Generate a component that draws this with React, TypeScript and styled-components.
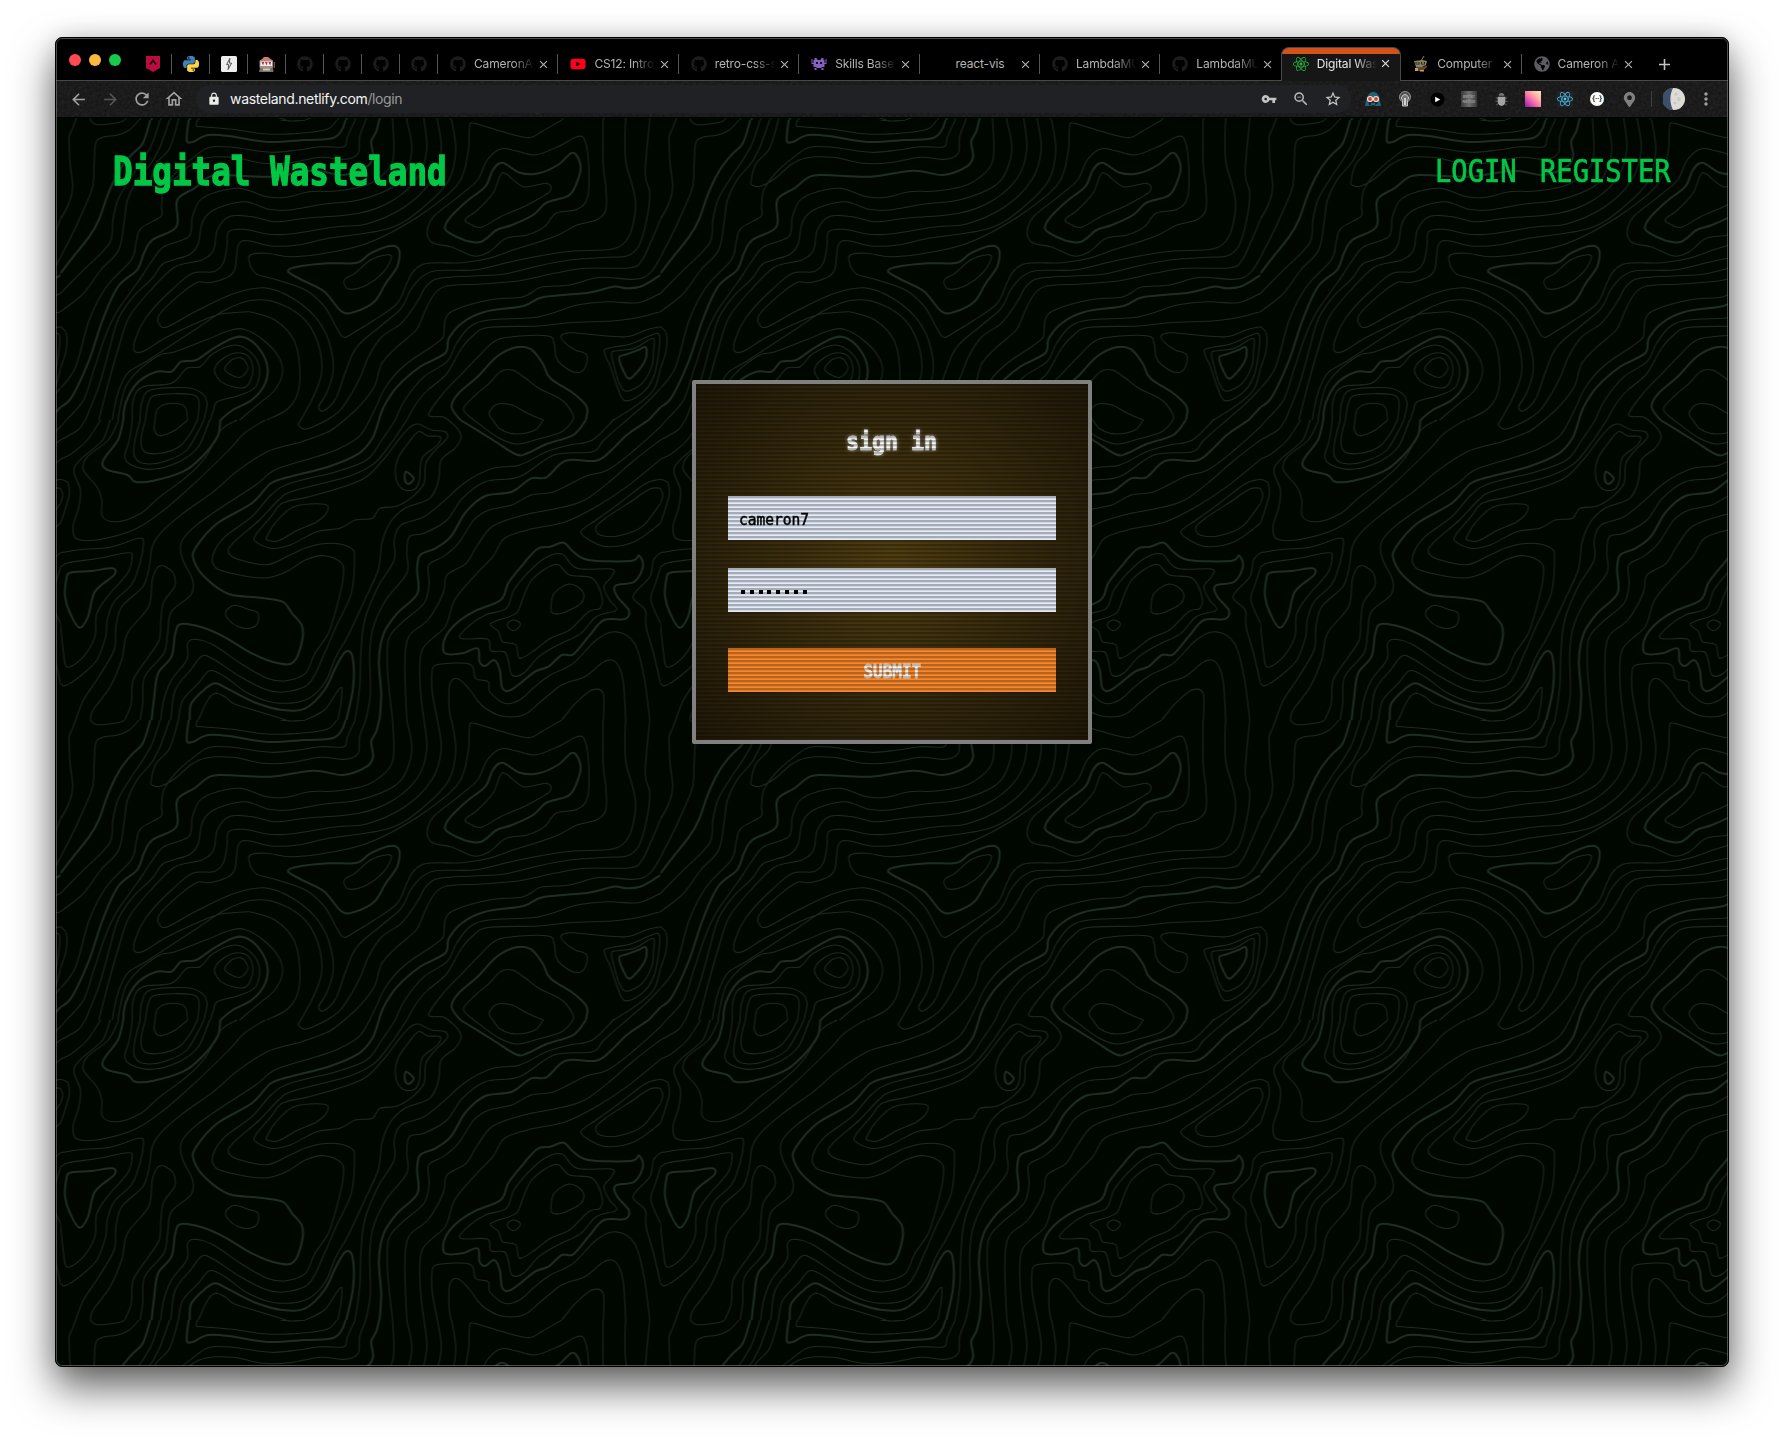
import React from 'react';
import styled, { createGlobalStyle } from 'styled-components';
import { FaGithub, FaReact, FaYoutube, FaGlobeAmericas, FaMapMarkerAlt } from 'react-icons/fa';
import {
  MdAdd, MdArrowBack, MdArrowForward, MdClose, MdLock, MdMoreVert,
  MdOutlineHome, MdRefresh, MdStarBorder, MdVpnKey, MdZoomOut,
} from 'react-icons/md';

const mono = '"DejaVu Sans Mono", "Liberation Mono", monospace';
const sans = 'Inter, Roboto, "Liberation Sans", sans-serif';
const green = '#00c846';

const GlobalStyle = createGlobalStyle`
  *, *::before, *::after { box-sizing: border-box; }
  html, body { margin: 0; background: #fff; }
  body { overflow: hidden; }
`;

/* ---------- window ---------- */

const Desktop = styled.div`
  width: 1784px;
  height: 1440px;
  padding: 37px 55px 73px;
  overflow: hidden;
  background: #fff;
`;

const BrowserWindow = styled.div`
  display: flex;
  flex-direction: column;
  height: 1330px;
  border: 1px solid #000;
  border-radius: 7px;
  overflow: hidden;
  position: relative;
  background: #000;
  box-shadow: 0 20px 42px rgba(0, 0, 0, 0.62), 0 0 22px rgba(0, 0, 0, 0.12);
  &::after {
    content: '';
    position: absolute;
    inset: 0;
    border: 1px solid rgba(150, 150, 150, 0.5);
    border-radius: 6px;
    pointer-events: none;
  }
`;

const TabStrip = styled.div`
  display: flex;
  flex: none;
  height: 43px;
  padding-left: 13px;
  border-bottom: 1px solid #484848;
`;

const Lights = styled.div`
  display: flex;
  gap: 8px;
  width: 65px;
  padding-top: 16px;
`;

const Light = styled.span<{ $color: string }>`
  width: 12px;
  height: 12px;
  border-radius: 50%;
  background: ${(p) => p.$color};
`;

const PinnedTab = styled.div`
  display: flex;
  justify-content: center;
  width: 38px;
  height: 20px;
  margin-top: 16px;
  border-right: 1px solid #565656;
  svg { margin-top: 2px; width: 16px; height: 16px; }
`;

const Tab = styled.div<{ $active?: boolean; $divider?: boolean }>`
  display: flex;
  align-items: center;
  flex: none;
  position: relative;
  width: 120.4px;
  height: ${(p) => (p.$active ? 34 : 20)}px;
  margin-top: ${(p) => (p.$active ? 9 : 16)}px;
  padding: ${(p) => (p.$active ? '0 8px 2px 11px' : '0 7px 0 12px')};
  border: solid ${(p) => (p.$active ? '#484848' : '#565656')};
  border-width: ${(p) => (p.$active ? '1px 1px 0' : p.$divider ? '0 1px 0 0' : '0')};
  border-radius: ${(p) => (p.$active ? '8px 8px 0 0' : '0')};
  background: ${(p) => (p.$active ? 'linear-gradient(#d4521a 0 6px, #161616 6px)' : 'none')};
  color: ${(p) => (p.$active ? '#e6e6e6' : '#b4b4b4')};
  > svg { flex: none; }
`;

const TabTitle = styled.span`
  flex: 1;
  margin-left: 8px;
  overflow: hidden;
  white-space: nowrap;
  font: 400 12px/20px ${sans};
  letter-spacing: -0.15px;
  mask-image: linear-gradient(90deg, #000 62%, transparent 98%);
`;

const ShortTitle = styled(TabTitle)`
  overflow: visible;
  mask-image: none;
`;

const TabIcon = styled.span`
  display: flex;
  flex: none;
  width: 16px;
  height: 16px;
  svg { width: 16px; height: 16px; }
`;

const CloseIcon = styled(MdClose)`
  width: 13px;
  height: 13px;
  margin-left: 1px;
`;

const NewTab = styled.div`
  display: flex;
  margin: 17px 0 0 13px;
  color: #c4c4c4;
  svg { width: 19px; height: 19px; }
`;

/* ---------- toolbar ---------- */

const Toolbar = styled.div`
  display: flex;
  align-items: center;
  flex: none;
  position: relative;
  height: 37px;
  padding-left: 13px;
  background: #131313;
  border-bottom: 1px solid #000;
`;

const Grain = styled.svg`
  position: absolute;
  inset: 0;
  width: 100%;
  height: 100%;
  opacity: 0.1;
`;

const ToolCell = styled.span<{ $tone?: string; $size?: number }>`
  display: flex;
  align-items: center;
  justify-content: center;
  flex: none;
  position: relative;
  width: 32px;
  height: 28px;
  color: ${(p) => p.$tone || '#a0a0a0'};
  svg { width: ${(p) => p.$size || 18}px; height: ${(p) => p.$size || 18}px; }
`;

const NavButtons = styled.div`
  display: flex;
  width: 127px;
  margin-left: -7px;
`;

const Omnibox = styled.div`
  display: flex;
  align-items: center;
  position: relative;
  width: 1155px;
  height: 28px;
  margin-left: 7px;
  padding: 0 2px 0 11px;
  border-radius: 14px;
  background: #202124;
  color: #eaeaea;
  > svg { width: 14px; height: 14px; margin-right: 9px; }
`;

const Address = styled.span`
  flex: 1;
  font: 400 14px/20px ${sans};
  letter-spacing: -0.33px;
  color: #f4f4f4;
  em { font-style: normal; color: #97999c; letter-spacing: -0.4px; }
`;

const Extensions = styled.div`
  display: flex;
  align-items: center;
  margin-left: 6px;
`;

const Divider = styled.span`
  position: relative;
  width: 1px;
  height: 16px;
  margin: 0 6px 0 6px;
  background: #404040;
`;

/* ---------- page ---------- */

const Page = styled.main`
  flex: 1;
  position: relative;
  background: #000600;
`;

const Topography = styled.svg`
  position: absolute;
  inset: 0;
  width: 100%;
  height: 100%;
`;

const Header = styled.header`
  display: flex;
  justify-content: space-between;
  position: relative;
  height: 108px;
  padding: 31px 57px 0 57px;
`;

const Fit = styled.span<{ $width: number }>`
  display: block;
  width: ${(p) => p.$width}px;
  white-space: nowrap;
`;

const Terminal = styled.span<{
  $size: number;
  $squeeze: number;
  $stroke: number;
  $bold?: boolean;
  $center?: boolean;
}>`
  display: inline-block;
  transform: scaleX(${(p) => p.$squeeze});
  transform-origin: ${(p) => (p.$center ? 'center' : 'left')} center;
  font: ${(p) => (p.$bold ? 700 : 400)} ${(p) => p.$size}px/1.2 ${mono};
  -webkit-text-stroke: ${(p) => p.$stroke}px currentColor;
  white-space: nowrap;
`;

const Nav = styled.nav`
  display: flex;
  gap: 24px;
  padding-top: 3px;
  color: ${green};
`;

const Brand = styled.div`
  color: ${green};
`;

const Card = styled.form`
  display: flex;
  flex-direction: column;
  position: relative;
  width: 400px;
  height: 364px;
  margin: 154px auto 0;
  padding: 44px 32px 0;
  border: 4px solid #808080;
  border-radius: 2px;
  background: radial-gradient(circle farthest-corner at 50% 50%, #544111 0%, #3a2d0d 48%, #201808 100%);
  &::after {
    content: '';
    position: absolute;
    inset: 0;
    background: repeating-linear-gradient(
      rgba(0, 0, 0, 0.29) 0 2px,
      rgba(0, 0, 0, 0.1) 2px 3px,
      rgba(0, 0, 0, 0.02) 3px 4px
    );
    pointer-events: none;
  }
`;

const CardTitle = styled.h2`
  height: 68px;
  margin: 0;
  text-align: center;
  color: #fff;
  text-shadow: 0 0 5px rgba(255, 255, 255, 0.75);
`;

const Field = styled.div`
  display: flex;
  align-items: center;
  height: 44px;
  margin-bottom: 28px;
  padding: 3px 12px 0 11px;
  background: #e8f0fe;
  color: #000;
`;

const Dots = styled.span`
  display: flex;
  gap: 4.8px;
  padding: 0 0 0 2px;
`;

const Dot = styled.i`
  width: 4px;
  height: 4px;
  background: #000;
`;

const Submit = styled.div`
  display: flex;
  align-items: center;
  justify-content: center;
  height: 44px;
  margin-top: 8px;
  padding-top: 2px;
  background: #ff8b2c;
  color: #fff;
`;

/* ---------- contour map ---------- */

/* Contours are surveyed on a 1568 x 1800 grid that is scaled to a 600px tile. A trailing z closes the loop. */
const thin = `
22,50 25,130 32,200 22,250 0,298|40,0 22,50
78,0 95,14 150,8 168,0
205,0 180,30 150,45 110,52 92,70 88,130 84,200 60,270 30,345 0,412
260,0 240,70 215,120 180,180 150,240 137,300 128,370 60,450 0,520
285,0 262,75 240,125 200,180 175,240 167,300 152,390 105,450 60,520 0,575
308,0 285,85 250,130 237,180 240,196 262,198 300,175 340,135 380,114 450,112 530,130 600,128 680,112 745,118 778,100 782,50 798,0
770,0 750,50 740,80 680,80 620,90 550,97 450,82 390,82 350,110 300,160 270,210 264,260 262,290 210,325 197,370 185,420 120,500 75,600 40,740 0,805
358,0 355,17 370,20 450,28 540,42 640,38 700,26 722,0
575,0 605,3 640,0
868,0 871,100 855,150 800,195 720,213 650,215 590,232 540,230 470,205 410,215 365,240 345,290 335,350 270,380 235,430 200,490 150,570 120,640 90,740 60,840 15,900
905,0 918,80 905,150 870,200 780,240 690,252 600,270 545,268 480,245 400,270 370,310 360,370 335,405 270,430 240,475 190,530 150,600 125,700 100,800 65,900
950,0 957,90 935,170 870,240 780,280 640,295 560,305 500,290 440,290 410,330 400,390 370,420 300,440 240,505 180,590 150,690 125,790 100,900
985,0 995,90 970,180 900,260 800,312 720,320 600,342 540,342 480,328 440,335 435,380 425,430 400,455 345,460 290,510 225,590 195,660 194,694 220,692 280,650 400,588 450,578 495,575
495,575 560,600 610,660 625,740 620,820 590,870 538,900
135,900 150,820 175,760 230,720 350,630 430,570 500,541 560,546 630,590 670,660 683,750 665,820 628,900
1022,0 1033,90 1015,180 950,260 860,325 700,355 620,375 550,378 490,362 465,375 455,450 430,475 390,488 355,488 300,535 258,585 258,612 280,620 360,570 450,522 530,503 600,530 665,590 700,660 713,750 695,820 675,860 688,872 720,835 745,755 775,680 840,615 890,565 915,510 940,475 980,452 1080,450 1160,430 1240,410 1340,393 1440,388 1480,360 1497,310 1503,250 1495,200 1478,130 1475,60 1477,0
150,900 160,840 175,790 210,745 260,705 300,695 380,660 440,632 480,628 530,660 570,710 580,760 560,810 520,850 468,900
188,900 190,840 215,800 290,790 330,745 365,740 400,700 455,675 500,700 520,745 510,800 470,825 410,845 400,870 392,900
403,745 430,712 465,698 495,715 502,760 485,800 450,800 415,780z
429,745 450,718 475,715 490,745 470,772 442,762z
208,900 212,850 235,810 330,803 370,820 383,850 375,900
222,900 230,850 250,825 340,823 362,845 358,900
247,900 255,865 290,850 325,860 332,900
1418,0 1418,130 1425,200 1425,270 1400,300 1350,315 1290,350 1170,395 1120,415 1050,428 960,430 925,450 905,490 880,550 820,600 770,635 740,652 720,620 690,560 640,510 560,478 510,460 492,420 500,403 540,400 600,410 680,402 780,378 860,340 960,270 1040,190 1065,100 1069,20 1080,10 1140,30 1220,53 1260,33 1310,0
1540,0 1528,160 1540,220 1530,310 1510,380 1480,408 1430,412 1330,420 1240,440 1160,462 1080,468 990,475 955,500 930,550 890,610 840,650 805,710 780,780 735,865 697,900
1568,298 1545,360 1520,420 1490,443 1370,445 1290,460 1200,482 1100,492 1010,498 975,525 950,580 930,630 880,680 840,730 820,800 780,860 742,900
1568,412 1540,460 1500,478 1410,472 1330,495 1255,502 1210,530 1120,540 1030,570 1005,600 1000,650 970,680 900,735 850,800 825,860 808,900
1568,520 1510,548 1430,545 1350,555 1250,590 1120,600 1070,620 1035,670 1010,725 950,770 900,840 875,900
1568,575 1500,595 1440,603 1330,608 1250,618 1120,622 1080,645 1045,690 1010,760 960,810 930,850 905,900
1568,620 1530,630 1480,650 1400,645 1335,638 1308,648 1320,670 1345,690 1375,705 1370,745 1348,758 1310,735 1295,710 1290,670 1275,648 1200,648 1140,660 1100,700 1050,760 1000,820 963,880 975,890 1005,893 1045,940 1035,980 995,1020 988,1080 965,1135 900,1165 860,1210 840,1270 830,1350 795,1440 750,1550 720,1610 690,1690 640,1740 560,1748 490,1720 430,1670 390,1652 360,1690 320,1740 308,1800
0,620 15,640 15,690 0,745
1565,645 1563,700 1550,770 1520,820 1475,842 1455,800 1437,740 1422,700 1430,685 1490,672 1545,645z
1440,698 1455,692 1500,685 1548,655 1550,690 1545,740 1520,790 1480,814 1460,790 1445,730z
1568,745 1550,810 1500,860 1445,900
1568,805 1530,850 1480,900
1058,298 1090,270 1130,220 1150,165 1165,162 1210,200 1270,190 1278,215 1220,255 1150,290 1100,322 1070,312z
958,340 975,290 1040,230 1090,180 1115,120 1150,87 1190,92 1240,105 1300,80 1350,50 1370,60 1380,130 1378,230 1350,268 1295,280 1265,320 1220,345 1165,355 1120,395 1080,408 1020,380 975,370z
745,475 770,460 810,420 850,405 865,412 845,455 800,495 755,508 741,490z
1080,900 1053,868 1080,830 1120,790 1150,755 1180,750 1210,770 1250,805 1310,840 1338,880 1340,900
1130,900 1120,880 1140,853 1180,855 1220,880 1262,900
15,900 0,920
65,900 45,930 0,960
105,900 70,960 30,1000 0,1018
130,900 110,960 60,1010 35,1050 52,1110 48,1160 33,1220 45,1258 110,1257 200,1225 270,1170 350,1090 440,990 480,940 535,900
152,900 125,960 70,1010 60,1050 95,1100 108,1140 110,1190 150,1205 210,1180 260,1130 330,1070 380,1010 420,930 462,900
188,900 180,960 168,1010 185,1035 240,1048 310,1025 360,980 390,900
208,900 195,960 192,1005 215,1030 270,1025 330,990 375,900
222,900 210,960 220,995 260,1000 310,980 340,940 358,900
247,900 245,930 260,947 300,930 332,900
628,900 622,915 640,928 670,915 697,900
742,900 700,935 630,965 540,995 460,1055 400,1115 320,1180 265,1235 240,1280 232,1340 215,1400 160,1460 145,1520 140,1590 100,1670 60,1740 40,1800
0,1298 60,1288 130,1282 205,1255 217,1270 205,1340 185,1395 140,1445 122,1500 118,1550 95,1620 50,1670 12,1697 0,1690
0,1342 20,1328 100,1315 175,1298 187,1310 175,1360 130,1420 95,1480 90,1550 60,1610 18,1642 8,1600 0,1510
78,1800 85,1770 130,1700 160,1620 175,1540 230,1460 240,1380 252,1345 268,1337 295,1360 298,1400 270,1445 262,1500 258,1560 230,1610 190,1680 185,1750 168,1800
808,900 780,950 720,990 640,1020 560,1050 510,1095 430,1155 350,1220 315,1270 320,1320 345,1380 340,1425 290,1475 280,1540 270,1600 220,1670 215,1750 208,1800
875,900 840,960 800,1020 720,1055 600,1090 550,1125 500,1190 430,1250 400,1300 400,1335 430,1355 530,1374 590,1355 640,1320 690,1307 735,1330 738,1380 722,1460 700,1540 665,1600 640,1660 590,1682 540,1675 470,1630 400,1575 350,1558 332,1572 330,1620 290,1680 270,1740 262,1800
905,900 870,960 820,1030 750,1070 610,1112 570,1140 520,1200 450,1270 440,1300 470,1320 540,1334 600,1305 650,1280 710,1270 760,1285 768,1320 760,1420 720,1520 690,1600 650,1690 590,1715 540,1710 470,1670 400,1618 370,1608 340,1650 300,1710 288,1800
360,1800 385,1740 405,1720 430,1730 455,1752 520,1775 590,1800
640,1800 690,1770 720,1720 735,1703 733,1750 725,1800
935,912 970,930 1005,935 1010,955 980,990 955,1030 950,1090 920,1130 880,1158 835,1165 815,1195 770,1200 730,1225 670,1235 600,1275 550,1285 510,1265 510,1245 550,1190 580,1150 650,1130 740,1100 800,1070 850,1010 890,950 915,920z
935,935 960,948 992,950 985,975 945,1015 938,1080 925,1108 895,1108 877,1075 880,1020 905,975z
540,1250 560,1210 610,1160 690,1153 697,1175 670,1205 620,1230 570,1262 540,1260z
432,1475 455,1456 490,1468 515,1478 515,1510 495,1525 465,1520 440,1500z
1080,900 1140,950 1190,972 1240,960 1310,935 1340,900
1130,900 1150,928 1190,942 1240,930 1262,900
1445,900 1390,960 1330,975 1270,995 1200,1035 1130,1045 1060,1085 1000,1145 950,1190 890,1215 872,1260 872,1320 830,1400 795,1500 785,1600 782,1700 770,1800
1480,900 1420,960 1390,995 1290,1005 1200,1070 1110,1085 1050,1135 1010,1200 950,1240 912,1250 905,1300 905,1360 850,1440 818,1520 808,1600 810,1720 798,1800
1568,920 1500,990 1430,1050 1370,1070 1290,1115 1230,1125 1180,1155 1120,1170 1080,1200 1040,1270 1000,1310 962,1335 963,1390 950,1450 890,1510 857,1560 855,1660 868,1800
1568,960 1500,1020 1440,1080 1370,1140 1300,1165 1210,1185 1130,1218 1090,1275 1060,1330 1010,1365 1000,1420 960,1500 910,1550 900,1640 905,1800
1568,1018 1480,1100 1400,1160 1320,1205 1220,1230 1160,1255 1130,1310 1080,1370 1030,1440 1005,1520 945,1590 940,1700 950,1800
1045,1555 1065,1520 1110,1485 1165,1465 1185,1410 1220,1360 1265,1315 1310,1302 1350,1345 1440,1347 1440,1370 1420,1400 1435,1440 1453,1470 1400,1490 1360,1540 1300,1575 1250,1610 1210,1660 1180,1665 1170,1620 1160,1595 1125,1592 1115,1557z
1125,1510 1190,1480 1210,1430 1235,1375 1295,1333 1330,1365 1390,1375 1415,1430 1410,1465 1380,1475 1330,1530 1280,1555 1240,1590 1200,1615 1190,1575 1155,1565 1145,1535z
1282,1460 1290,1420 1330,1392 1365,1415 1360,1450 1310,1480 1285,1478z
1167,1515 1183,1500 1202,1512 1185,1532z
1568,1078 1530,1090 1460,1150 1400,1200 1360,1235 1390,1265 1430,1280 1500,1265 1568,1210
1568,1105 1540,1107 1490,1145 1430,1190 1400,1220 1410,1245 1460,1247 1520,1220 1568,1150
0,1078 20,1090 22,1130 0,1210
0,1105 6,1125 0,1150
1568,1298 1550,1320 1540,1370 1500,1420 1500,1440 1528,1470 1530,1520 1550,1600 1568,1690
1568,1342 1555,1390 1543,1440 1568,1510
985,1800 972,1720 972,1650 990,1633 1070,1633 1085,1675 1118,1685 1122,1715 1160,1750 1200,1740 1240,1700 1280,1665 1340,1630 1400,1560 1450,1535 1500,1570 1525,1670 1540,1800
1020,1800 1015,1750 1018,1690 1040,1677 1070,1710 1100,1755 1150,1787 1210,1785 1260,1740 1310,1695 1370,1670 1420,1625 1450,1625 1470,1680 1477,1800
1310,1800 1350,1745 1390,1710 1418,1720 1419,1800
`;

const thick = `
235,0 215,70 185,105 155,150 125,220 100,300 75,350 30,415 0,460
335,0 330,60 345,66 385,45 440,48 540,66 640,60 710,55 735,30 745,0
833,0 825,35 812,65 817,110 800,140 740,165 660,152 550,170 430,165 390,170 350,205 305,240 303,320 240,360 218,400 200,450 150,500 110,600 75,720 30,830 0,862
164,900 170,850 200,790 250,755 290,755 315,725 355,720 400,685 450,655 480,652 515,680 540,735 535,790 500,840 450,870 418,900
1005,320 1020,290 1060,245 1110,200 1130,150 1155,128 1200,158 1250,160 1300,135 1338,98 1358,130 1355,170 1330,225 1270,248 1235,285 1180,315 1140,330 1100,365 1060,362 1015,338z
595,455 620,440 700,430 775,428 810,400 860,378 885,390 880,440 850,490 820,545 770,575 735,575 690,515 640,485z
1568,465 1520,498 1480,505 1445,500 1380,518 1260,532 1210,558 1110,575 1050,608 1015,655 1005,700 940,740 880,800 845,860 832,900
1460,712 1480,703 1510,690 1530,682 1530,715 1515,745 1487,776 1470,750z
1045,900 1022,860 1040,820 1090,770 1140,710 1190,682 1230,688 1260,730 1280,775 1340,820 1375,860 1373,900
1568,862 1537,900
1045,900 1130,960 1190,1003 1220,1000 1270,972 1340,945 1373,900
1537,900 1480,945 1440,990 1400,1022 1320,1022 1270,1072 1230,1075 1180,1115 1110,1128 1060,1175 1020,1250 980,1285 940,1305 932,1350 933,1420 880,1480 845,1540 832,1620 838,1720 834,1800
164,900 150,960 112,1020 120,1048 175,1065 195,1085 240,1083 320,1055 370,1010 410,950 418,900
15,1380 25,1358 80,1353 135,1345 140,1365 90,1415 72,1490 50,1523 25,1480 12,1430z
832,900 815,955 780,1000 700,1040 600,1070 550,1090 500,1150 410,1210 355,1280 348,1320 380,1375 440,1422 520,1433 580,1445 605,1480 630,1515 632,1560 610,1625 570,1630 500,1600 430,1552 370,1522 315,1512 300,1540 290,1610 255,1660 245,1730 238,1800
338,1800 342,1750 380,1705 405,1690 440,1708 510,1748 580,1770 640,1765 690,1710 720,1640 745,1595 763,1610 765,1700 747,1800
903,1055 923,1075 910,1092 900,1080z
1005,1600 1003,1560 1030,1515 1080,1475 1150,1440 1170,1390 1200,1345 1245,1288 1280,1280 1315,1268 1340,1295 1380,1320 1490,1323 1512,1307 1522,1340 1500,1385 1450,1397 1455,1430 1485,1470 1475,1497 1420,1500 1380,1550 1340,1603 1310,1605 1275,1640 1240,1655 1180,1708 1155,1705 1148,1650 1133,1620 1110,1638 1095,1625 1090,1585 1050,1600z
`;

type Point = [number, number];

function smooth(source: string): string {
  const closed = source.endsWith('z');
  const pts: Point[] = source
    .replace('z', '')
    .trim()
    .split(/\s+/)
    .map((pair) => {
      const [x, y] = pair.split(',').map(Number);
      return [(x * 600) / 1568, y / 3] as Point;
    });
  const n = pts.length;
  const at = (i: number): Point => (closed ? pts[(i + n) % n] : pts[Math.max(0, Math.min(n - 1, i))]);
  let d = `M${pts[0][0].toFixed(1)} ${pts[0][1].toFixed(1)}`;
  for (let i = 0; i < (closed ? n : n - 1); i += 1) {
    const [a, b, c, e] = [at(i - 1), at(i), at(i + 1), at(i + 2)];
    const c1 = [b[0] + (c[0] - a[0]) / 6, b[1] + (c[1] - a[1]) / 6];
    const c2 = [c[0] - (e[0] - b[0]) / 6, c[1] - (e[1] - b[1]) / 6];
    d += `C${[...c1, ...c2, ...c].map((v) => v.toFixed(1)).join(' ')}`;
  }
  return closed ? `${d}Z` : d;
}

const toPath = (lines: string) => lines.trim().split(/[\n|]/).map(smooth).join('');
const thinPath = toPath(thin);
const thickPath = toPath(thick);

/* ---------- icons ---------- */

const snake =
  'M14.25.18l.9.2.73.26.59.3.45.32.34.34.25.34.16.33.1.3.04.26.02.2-.01.13V8.5l-.05.63-.13.55-.21.46-.26.38-.3.31-.33.25-.35.19-.35.14-.33.1-.3.07-.26.04-.21.02H8.77l-.69.05-.59.14-.5.22-.41.27-.33.32-.27.35-.2.36-.15.37-.1.35-.07.32-.04.27-.02.21v3.06H3.17l-.21-.03-.28-.07-.32-.12-.35-.18-.36-.26-.36-.36-.35-.46-.32-.59-.28-.73-.21-.88-.14-1.05-.05-1.23.06-1.22.16-1.04.24-.87.32-.71.36-.57.4-.44.42-.33.42-.24.4-.16.36-.1.32-.05.24-.01h.16l.06.01h8.16v-.83H6.18l-.01-2.75-.02-.37.05-.34.11-.31.17-.28.25-.26.31-.23.38-.2.44-.18.51-.15.58-.12.64-.1.71-.06.77-.04.84-.02 1.27.05zm-6.3 1.98l-.23.33-.08.41.08.41.23.34.33.22.41.09.41-.09.33-.22.23-.34.08-.41-.08-.41-.23-.33-.33-.22-.41-.09-.41.09z';

const PythonIcon = () => (
  <svg viewBox="0 0 24 24">
    <path d={snake} fill="#3f82b8" />
    <path d={snake} fill="#ffd545" transform="rotate(180 12 12)" />
  </svg>
);
const ShieldIcon = () => (
  <svg viewBox="0 0 16 16">
    <path d="M1 0h14v12l-7 4-7-4z" fill="#ba0c3f" />
    <path d="M5 8.5l3-4 3 4" fill="none" stroke="#180008" strokeWidth="1.7" />
  </svg>
);
const BoltIcon = () => (
  <svg viewBox="0 0 16 16">
    <rect width="16" height="16" rx="1.5" fill="#eee" />
    <path d="M8.9 2.300L5.600 8.600h2.200l-.8 5 3.600-6.500H8.300z" fill="#eee" stroke="#555" strokeWidth="1" />
  </svg>
);
const SlotIcon = () => (
  <svg viewBox="0 0 16 16">
    <path d="M2 4l3-3h4l4 3z" fill="#d9795d" />
    <rect x="0.500" y="4" width="13.500" height="8" rx="1" fill="#9a948d" />
    <rect x="1.500" y="5.500" width="11.500" height="4.500" fill="#f7efef" />
    <path d="M2.500 6h2.600l-1 3.500zM6 6h2.600l-1 3.500zM9.500 6h2.600l-1 3.500z" fill="#d31d34" />
    <path d="M1 12h13l.5 4H0z" fill="#77726c" />
    <path d="M4 12.500h7v2H4z" fill="#d8c7a8" />
    <path d="M15.300 6v6" stroke="#8c4d45" strokeWidth="1.300" />
  </svg>
);
const InvaderIcon = () => (
  <svg viewBox="0 0 16 16" fill="#8561c0">
    <path d="M3.500 2h2l1 2h3l1-2h2v2h1v3h1V3h1v5h-2v3h-3v1h2v2h-2v-2H5.500v2h-2v-2h2v-1h-3V8h-2V3h1v4h1V4h1z" />
    <path d="M5 6h2v2H5zM9 6h2v2H9z" fill="#140822" />
  </svg>
);
const RobotIcon = () => (
  <svg viewBox="0 0 16 16">
    <path d="M8 5l3-5" stroke="#89806e" />
    <path d="M1 5l8-1 5 1-1 4-4 2H3z" fill="#8c8168" />
    <path d="M2.500 6h4v2.500h-4zM8 6h4v2.500H8z" fill="#23261c" />
    <path d="M3.500 7h2M9 7h2" stroke="#b7cf43" />
    <path d="M3 11h8l2-2 1 2-4 4H4z" fill="#5e4935" />
    <path d="M2 12h3v3H2zM7 14h4v1.500H7z" fill="#c99a55" />
  </svg>
);
const HoodIcon = () => (
  <svg viewBox="0 0 16 16">
    <path d="M0 15C1 8 3 1 8 1s6 4 7 9l1 5z" fill="#216477" />
    <path d="M3 8h10v4l-4 3-5-1z" fill="#16262d" />
    <circle cx="5" cy="8" r="2.500" fill="#c94834" stroke="#f3dfd8" strokeWidth="1.200" />
    <circle cx="11" cy="8" r="2.500" fill="#c94834" stroke="#f3dfd8" strokeWidth="1.200" />
    <path d="M6 13h4" stroke="#4da0b5" />
  </svg>
);
const BulbIcon = () => (
  <svg viewBox="0 0 16 16">
    <circle cx="8" cy="6" r="5.500" fill="#4c4c4c" stroke="#929292" />
    <path d="M5.500 15V9.500a3.500 3.500 0 1 1 5 0V15z" fill="#777" stroke="#c4c4c4" />
    <path d="M7.200 7h1.600v7H7.200z" fill="#e8e8e8" />
  </svg>
);
const BeetleIcon = () => (
  <svg viewBox="0 0 16 16">
    <path d="M2 6l3 1.500M1.500 10H5M2.500 14L5 12M14 6l-3 1.500M14.500 10H11M13.500 14L11 12" stroke="#555" strokeWidth="1.200" />
    <path d="M5 4a3 3 0 0 1 6 0z" fill="#777" />
    <path d="M4 5h8v5a4 4.800 0 0 1-8 0z" fill="#a4a4a4" />
  </svg>
);
const PlayIcon = () => (
  <svg viewBox="0 0 16 16">
    <circle cx="8" cy="8" r="7.500" fill="#000" />
    <path d="M5.500 5v6l5.500-3z" fill="#fff" />
  </svg>
);
const GrayTile = styled.span`
  width: 16px;
  height: 16px;
  padding-top: 3px;
  overflow: hidden;
  background: linear-gradient(90deg, #383838, #707070 50%, #383838);
  color: #959595;
  font: 700 4px/5px ${sans};
  text-align: center;
`;
const PinkTile = styled.span`
  width: 16px;
  height: 16px;
  background: linear-gradient(45deg, #9b24ad 5%, #fa72ad 45%, #ffb6a7 70%, #ffe2cf);
`;
const ReactTile = styled.span`
  display: flex;
  background: #20242a;
  color: #4cc3e8;
`;
const BracesBadge = styled.span`
  width: 14px;
  height: 14px;
  border-radius: 50%;
  background: #fff;
  color: #222;
  font: 700 7px/13px ${sans};
  letter-spacing: -0.3px;
  text-align: center;
  white-space: nowrap;
`;
const MoonIcon = () => (
  <svg viewBox="0 0 22 22">
    <circle cx="11" cy="11" r="11" fill="#dedbd6" />
    <path d="M10 0A11 11 0 0 0 10 22C6.500 15 6.500 7 10 0z" fill="#3c506c" />
    <circle cx="13" cy="6" r="1.500" fill="#c9c5c0" />
    <circle cx="16" cy="11" r="2" fill="#cdc9c3" />
    <circle cx="12" cy="15" r="1.300" fill="#c6c2bc" />
  </svg>
);

const cat = <FaGithub color="#1b1c1e" />;
const pinned = [<ShieldIcon />, <PythonIcon />, <BoltIcon />, <SlotIcon />, cat, cat, cat, cat];

const tabs: { title: string; icon: React.ReactNode; active?: boolean; divider?: boolean }[] = [
  { title: 'CameronAl', icon: cat, divider: true },
  { title: 'CS12: Intro', icon: <FaYoutube color="#ff0019" />, divider: true },
  { title: 'retro-css-s', icon: cat, divider: true },
  { title: 'Skills Base', icon: <InvaderIcon />, divider: true },
  { title: 'react-vis', icon: null, divider: true },
  { title: 'LambdaMU', icon: cat, divider: true },
  { title: 'LambdaMU', icon: cat },
  { title: 'Digital Was', icon: <FaReact color="#21c03c" />, active: true },
  { title: 'Computer', icon: <RobotIcon />, divider: true },
  { title: 'Cameron A', icon: <FaGlobeAmericas color="#5b5d62" /> },
];

export default function App() {
  return (
    <Desktop>
      <GlobalStyle />
      <BrowserWindow>
        <TabStrip>
          <Lights>
            <Light $color="#ff4a52" />
            <Light $color="#fdb93e" />
            <Light $color="#17cb4b" />
          </Lights>
          {pinned.map((icon, i) => (
            <PinnedTab key={i}>{icon}</PinnedTab>
          ))}
          {tabs.map((tab, i) => {
            const Title = tab.icon ? TabTitle : ShortTitle;
            return (
              <Tab key={i} $active={tab.active} $divider={tab.divider}>
                <TabIcon>{tab.icon}</TabIcon>
                <Title>{tab.title}</Title>
                <CloseIcon />
              </Tab>
            );
          })}
          <NewTab><MdAdd /></NewTab>
        </TabStrip>
        <Toolbar>
          <Grain>
            <filter id="grain">
              <feTurbulence type="fractalNoise" baseFrequency="0.35" numOctaves={3} />
              <feColorMatrix type="saturate" values="0" />
            </filter>
            <rect width="100%" height="100%" filter="url(#grain)" />
          </Grain>
          <NavButtons>
            <ToolCell $size={19}><MdArrowBack /></ToolCell>
            <ToolCell $size={19} $tone="#555"><MdArrowForward /></ToolCell>
            <ToolCell $size={20}><MdRefresh /></ToolCell>
            <ToolCell $size={20}><MdOutlineHome /></ToolCell>
          </NavButtons>
          <Omnibox>
            <MdLock />
            <Address>wasteland.netlify.com<em>/login</em></Address>
            <ToolCell $size={16} $tone="#c4c4c4"><MdVpnKey /></ToolCell>
            <ToolCell $size={18} $tone="#b8b8b8"><MdZoomOut /></ToolCell>
            <ToolCell $size={18} $tone="#c8c8c8"><MdStarBorder /></ToolCell>
          </Omnibox>
          <Extensions>
            <ToolCell $size={16}><HoodIcon /></ToolCell>
            <ToolCell $size={16}><BulbIcon /></ToolCell>
            <ToolCell $size={15}><PlayIcon /></ToolCell>
            <ToolCell><GrayTile>Better<br />Netflix</GrayTile></ToolCell>
            <ToolCell $size={15}><BeetleIcon /></ToolCell>
            <ToolCell><PinkTile /></ToolCell>
            <ToolCell $size={16}><ReactTile><FaReact /></ReactTile></ToolCell>
            <ToolCell><BracesBadge>{'{··}'}</BracesBadge></ToolCell>
            <ToolCell $size={15} $tone="#808080"><FaMapMarkerAlt /></ToolCell>
            <Divider />
            <ToolCell $size={22}><MoonIcon /></ToolCell>
            <ToolCell $size={20}><MdMoreVert /></ToolCell>
          </Extensions>
        </Toolbar>
        <Page>
          <Topography>
            <defs>
              <pattern id="contours" x="4.5" y="2" width="600" height="600" patternUnits="userSpaceOnUse">
                <path d={thinPath} fill="none" stroke="#1d2a1e" strokeWidth="1.05" />
                <path d={thickPath} fill="none" stroke="#1e2e21" strokeWidth="2" />
              </pattern>
            </defs>
            <rect width="100%" height="100%" fill="url(#contours)" />
          </Topography>
          <Header>
            <Brand>
              <Fit $width={334}>
                <Terminal $size={39} $squeeze={0.836} $stroke={1.3} $bold>Digital Wasteland</Terminal>
              </Fit>
            </Brand>
            <Nav>
              <Fit $width={81}><Terminal $size={32} $squeeze={0.847} $stroke={0.7}>LOGIN</Terminal></Fit>
              <Fit $width={131}><Terminal $size={32} $squeeze={0.847} $stroke={0.7}>REGISTER</Terminal></Fit>
            </Nav>
          </Header>
          <Card>
            <CardTitle>
              <Terminal $size={24} $squeeze={0.9} $stroke={0.7} $bold $center>sign in</Terminal>
            </CardTitle>
            <Field><Terminal $size={16} $squeeze={0.91} $stroke={0.5}>cameron7</Terminal></Field>
            <Field>
              <Dots>{Array.from({ length: 8 }, (_, i) => <Dot key={i} />)}</Dots>
            </Field>
            <Submit><Terminal $size={19} $squeeze={0.84} $stroke={0.5} $bold $center>SUBMIT</Terminal></Submit>
          </Card>
        </Page>
      </BrowserWindow>
    </Desktop>
  );
}
